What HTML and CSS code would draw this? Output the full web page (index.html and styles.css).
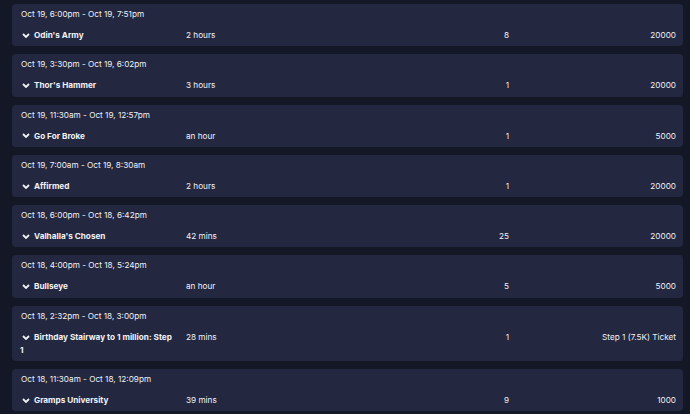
FILE: index.html
```html
<!DOCTYPE html>
<html>
<head>
<meta charset="utf-8">
<link rel="stylesheet" href="styles.css">
</head>
<body>
<div class="list">
  <div class="card">
    <div class="date">Oct 19, 6:00pm - Oct 19, 7:51pm</div>
    <div class="row"><div class="title"><svg class="chev" viewBox="0 0 8 5"><path d="M1 1l3 3 3-3"/></svg>Odin's Army</div><div class="dur">2 hours</div><div class="num">8</div><div class="prize">20000</div></div>
  </div>
  <div class="card">
    <div class="date">Oct 19, 3:30pm - Oct 19, 6:02pm</div>
    <div class="row"><div class="title"><svg class="chev" viewBox="0 0 8 5"><path d="M1 1l3 3 3-3"/></svg>Thor's Hammer</div><div class="dur">3 hours</div><div class="num">1</div><div class="prize">20000</div></div>
  </div>
  <div class="card">
    <div class="date">Oct 19, 11:30am - Oct 19, 12:57pm</div>
    <div class="row"><div class="title"><svg class="chev" viewBox="0 0 8 5"><path d="M1 1l3 3 3-3"/></svg>Go For Broke</div><div class="dur">an hour</div><div class="num">1</div><div class="prize">5000</div></div>
  </div>
  <div class="card">
    <div class="date">Oct 19, 7:00am - Oct 19, 8:30am</div>
    <div class="row"><div class="title"><svg class="chev" viewBox="0 0 8 5"><path d="M1 1l3 3 3-3"/></svg>Affirmed</div><div class="dur">2 hours</div><div class="num">1</div><div class="prize">20000</div></div>
  </div>
  <div class="card">
    <div class="date">Oct 18, 6:00pm - Oct 18, 6:42pm</div>
    <div class="row"><div class="title"><svg class="chev" viewBox="0 0 8 5"><path d="M1 1l3 3 3-3"/></svg>Valhalla's Chosen</div><div class="dur">42 mins</div><div class="num">25</div><div class="prize">20000</div></div>
  </div>
  <div class="card">
    <div class="date">Oct 18, 4:00pm - Oct 18, 5:24pm</div>
    <div class="row"><div class="title"><svg class="chev" viewBox="0 0 8 5"><path d="M1 1l3 3 3-3"/></svg>Bullseye</div><div class="dur">an hour</div><div class="num">5</div><div class="prize">5000</div></div>
  </div>
  <div class="card">
    <div class="date">Oct 18, 2:32pm - Oct 18, 3:00pm</div>
    <div class="row"><div class="title"><svg class="chev" viewBox="0 0 8 5"><path d="M1 1l3 3 3-3"/></svg>Birthday Stairway to 1 million: Step 1</div><div class="dur">28 mins</div><div class="num">1</div><div class="prize">Step 1 (7.5K) Ticket</div></div>
  </div>
  <div class="card">
    <div class="date">Oct 18, 11:30am - Oct 18, 12:09pm</div>
    <div class="row"><div class="title"><svg class="chev" viewBox="0 0 8 5"><path d="M1 1l3 3 3-3"/></svg>Gramps University</div><div class="dur">39 mins</div><div class="num">9</div><div class="prize">1000</div></div>
  </div>
</div>
</body>
</html>
```
FILE: styles.css
```css
html, body {
  margin: 0;
  background: #141826;
}
body {
  padding: 4px 7px 0 12px;
  font-family: Inter, "Noto Sans", sans-serif;
  color: #f0f1f7;
  font-size: 8.2px;
}
.list {
  display: flex;
  flex-direction: column;
  gap: 8px;
}
.card {
  background: #232840;
  border-radius: 4px;
  padding: 4px 7px 4.3px 8px;
}
.date {
  line-height: 12px;
  padding-left: 1px;
}
.row {
  display: grid;
  grid-template-columns: 1fr 1fr 1fr 1fr;
  margin-top: 9px;
  line-height: 13px;
}
.title {
  font-weight: 700;
  padding-right: 9px;
}
.chev {
  width: 8px;
  height: 5px;
  margin: 0 4px 1px 2px;
  fill: none;
  stroke: #f0f1f7;
  stroke-width: 1.8;
  vertical-align: middle;
}
.dur {
  padding-left: 2px;
}
.num {
  text-align: right;
  padding-right: 3px;
}
.prize {
  text-align: right;
}
```
